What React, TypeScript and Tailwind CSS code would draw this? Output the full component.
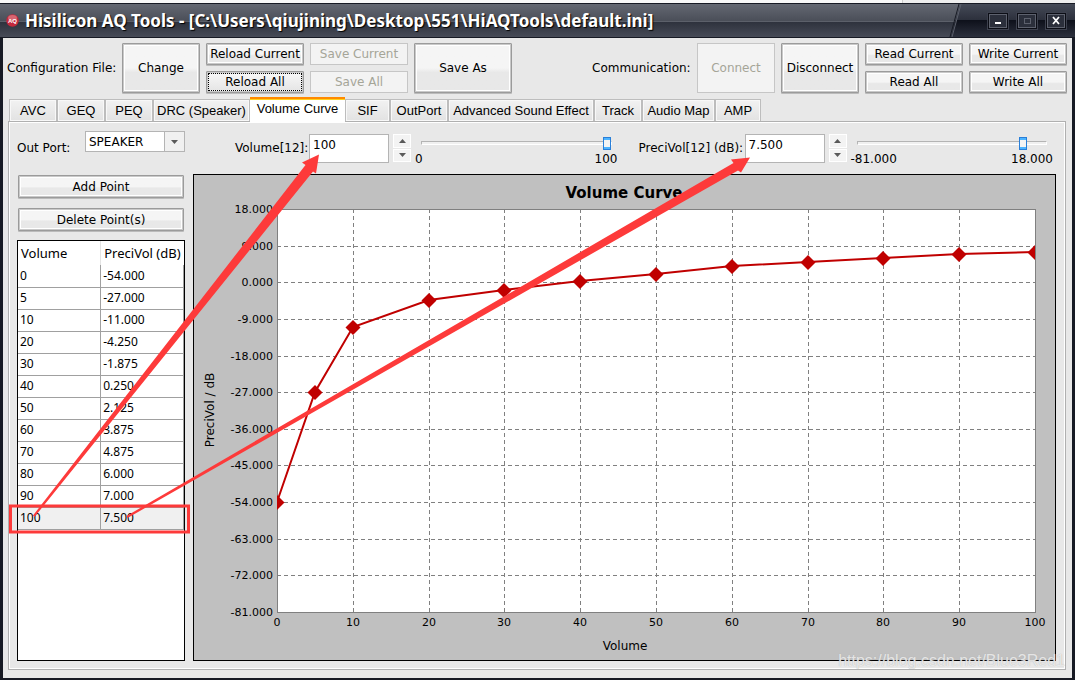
import { useState } from "react";

type Point = { volume: number; db: number };

const POINTS: Point[] = [
  { volume: 0, db: -54 },
  { volume: 5, db: -27 },
  { volume: 10, db: -11 },
  { volume: 20, db: -4.25 },
  { volume: 30, db: -1.875 },
  { volume: 40, db: 0.25 },
  { volume: 50, db: 2.125 },
  { volume: 60, db: 3.875 },
  { volume: 70, db: 4.875 },
  { volume: 80, db: 6 },
  { volume: 90, db: 7 },
  { volume: 100, db: 7.5 },
];

const TABS = [
  { name: "AVC", width: "w-12" },
  { name: "GEQ", width: "w-12" },
  { name: "PEQ", width: "w-12" },
  { name: "DRC (Speaker)", width: "w-[97px]" },
  { name: "Volume Curve", width: "w-[95px]" },
  { name: "SIF", width: "w-[45px]" },
  { name: "OutPort", width: "w-[58px]" },
  { name: "Advanced Sound Effect", width: "w-[146px]" },
  { name: "Track", width: "w-12" },
  { name: "Audio Map", width: "w-[73px]" },
  { name: "AMP", width: "w-[46px]" },
];

const DB_TICKS = [18, 9, 0, -9, -18, -27, -36, -45, -54, -63, -72, -81];
const VOLUME_TICKS = [0, 10, 20, 30, 40, 50, 60, 70, 80, 90, 100];

// plot area inside the chart's viewBox
const PLOT = { left: 83, top: 34, width: 758, height: 403 };
const toX = (volume: number) => Math.round(PLOT.left + (volume / 100) * PLOT.width);
const toY = (db: number) => Math.round(PLOT.top + ((18 - db) / 99) * PLOT.height);

const ToolButton = ({ children, className = "", disabled = false, focused = false }: any) => (
  <button
    disabled={disabled}
    className={`flex items-center justify-center whitespace-nowrap border p-px ${
      disabled
        ? "border-[#c6c6c6] bg-[#f3f3f3] text-[#a5a598]"
        : "rounded-[1px] border-[#9b9b9b] bg-[#c9c9c9] text-black shadow-[0_1px_0_#bbb]"
    } ${className}`}
  >
    <span
      className={`flex h-full w-full items-center justify-center ${
        disabled
          ? ""
          : focused
            ? "border border-dotted border-black bg-linear-to-b from-[#f6f6f6] to-[#e6e6e6]"
            : "border border-white bg-linear-to-b from-[#f5f5f5] from-50% to-[#e8e8e8] to-60%"
      }`}
    >
      {children}
    </span>
  </button>
);

const ButtonPair = ({ top, bottom, disabled, focusBottom }: any) => (
  <div className="flex w-[98px] flex-col gap-1.5">
    <ToolButton disabled={disabled} className="h-[22px]">
      {top}
    </ToolButton>
    <ToolButton disabled={disabled} focused={focusBottom} className="h-[22px]">
      {bottom}
    </ToolButton>
  </div>
);

const TitleBar = () => (
  <header className="relative flex h-[35px] items-center justify-between border-y border-[#171a24] bg-linear-to-b from-[#646872] via-[#4b4f59] via-50% to-[#434753]">
    <div className="absolute inset-x-0 bottom-0 h-4 border-t border-[#5c606a] bg-linear-to-b from-[#2e323d] to-[#474b57]" />
    <svg
      className="absolute top-0 right-0 h-[33px] w-[126px]"
      viewBox="0 0 126 33"
      preserveAspectRatio="none"
    >
      <defs>
        <linearGradient id="caption" x1="0" y1="0" x2="0" y2="1">
          <stop offset="0" stopColor="#454a57" />
          <stop offset="0.5" stopColor="#2b2f3b" />
          <stop offset="0.5" stopColor="#0e111b" />
          <stop offset="1" stopColor="#2c303d" />
        </linearGradient>
      </defs>
      <path d="M11 0H126V33H2Z" fill="url(#caption)" />
      <path d="M10 0L1 33" stroke="#171a24" />
      <path d="M12 0L3 33" stroke="#5c606c" />
    </svg>
    <div className="relative flex items-center gap-1.5 pl-1.5">
      <svg className="h-[13px] w-[13px]" viewBox="0 0 13 13">
        <circle cx="6.5" cy="6.5" r="6.2" fill="#c4283c" />
        <ellipse cx="6.5" cy="4" rx="4.5" ry="3" fill="#e08088" opacity="0.7" />
        <text
          x="6.5"
          y="9"
          textAnchor="middle"
          className="fill-white font-['Liberation_Sans'] text-[6px] font-bold"
        >
          AQ
        </text>
      </svg>
      <h1 className="font-['Noto_Sans','DejaVu_Sans',sans-serif] text-[17px] leading-6 font-bold whitespace-pre text-white [text-shadow:1px_1px_1px_#000]">
        {"Hisilicon AQ Tools - [C:\\Users\\qiujining\\Desktop\\551\\HiAQTools\\default.ini]"}
      </h1>
    </div>
    <div className="relative flex gap-[9px] pr-[9px]">
      {["Minimize", "Maximize", "Close"].map((name) => (
        <button
          key={name}
          aria-label={name}
          className="flex h-4 w-5 items-center justify-center border border-[#0b0d15] bg-[#2b2f3b] outline outline-[#3d414e] inset-ring inset-ring-[#5d616d]"
        >
          <svg className="h-3 w-3" viewBox="0 0 12 12" fill="none" shapeRendering="crispEdges">
            {name === "Minimize" && <path d="M3 7h6v2H3z" fill="#fff" />}
            {name === "Maximize" && <path d="M3.5 3.5h6v5h-6zM3 3h7" stroke="#5d616d" />}
            {name === "Close" && (
              <path d="M3 2l6 7M9 2l-6 7" stroke="#fff" strokeWidth="1.8" shapeRendering="auto" />
            )}
          </svg>
        </button>
      ))}
    </div>
  </header>
);

const Toolbar = () => (
  <div className="flex items-center gap-1.5 pt-[5px] pr-[5px] pl-1">
    <span className="w-[109px] whitespace-nowrap">Configuration File:</span>
    <ToolButton className="h-[50px] w-[78px]">Change</ToolButton>
    <ButtonPair top="Reload Current" bottom="Reload All" focusBottom />
    <ButtonPair top="Save Current" bottom="Save All" disabled />
    <ToolButton className="h-[50px] w-[98px]">Save As</ToolButton>
    <span className="ml-auto w-[99px] whitespace-nowrap">Communication:</span>
    <ToolButton disabled className="h-[50px] w-[78px]">
      Connect
    </ToolButton>
    <ToolButton className="h-[50px] w-[78px]">Disconnect</ToolButton>
    <ButtonPair top="Read Current" bottom="Read All" />
    <ButtonPair top="Write Current" bottom="Write All" />
  </div>
);

const TabBar = ({ active, setActive }: any) => (
  <nav className="flex h-6 items-end pl-px font-['Liberation_Sans',Arial,sans-serif] text-[13px]">
    {TABS.map((tab) => (
      <button
        key={tab.name}
        onClick={() => setActive(tab.name)}
        className={`whitespace-nowrap ${tab.width} ${
          active === tab.name
            ? "relative -mb-px h-[25px] border-t-2 border-[#ff8a00] bg-white pb-1 shadow-[inset_0_1px_0_#ffd21e]"
            : "h-[22px] border border-b-0 border-[#bdbdbd] bg-linear-to-b from-[#f2f2f2] to-[#e2e2e2] inset-ring inset-ring-[#f8f8f8]"
        }`}
      >
        {tab.name}
      </button>
    ))}
  </nav>
);

const Spinner = ({ label }: any) => (
  <div className="flex h-[28px] w-[18px] flex-col gap-px">
    <button
      aria-label={`Increase ${label}`}
      className="flex flex-1 items-center justify-center border border-white bg-[#f3f3f3]"
    >
      <svg className="h-1 w-[7px]" viewBox="0 0 7 4">
        <path d="M3.5 0L7 4H0Z" fill="#5a5a5a" />
      </svg>
    </button>
    <button
      aria-label={`Decrease ${label}`}
      className="flex flex-1 items-center justify-center border border-white bg-[#f3f3f3]"
    >
      <svg className="h-1 w-[7px]" viewBox="0 0 7 4">
        <path d="M3.5 4L7 0H0Z" fill="#5a5a5a" />
      </svg>
    </button>
  </div>
);

const ValueControl = ({ id, label, labelWidth, text, min, max, minText, maxText, value }: any) => {
  const [current, setCurrent] = useState(value);

  return (
    <div className="flex flex-auto items-start">
      <label htmlFor={id} className={`shrink-0 pt-1.5 whitespace-nowrap ${labelWidth}`}>
        {label}
      </label>
      <input
        id={id}
        defaultValue={text}
        className="h-[29px] w-20 shrink-0 border border-[#b4b4b4] bg-white px-[3px] pb-2"
      />
      <div className="pl-1">
        <Spinner label={label} />
      </div>
      <div className="w-32 grow pl-1">
        <input
          type="range"
          aria-label={`${label} slider`}
          min={min}
          max={max}
          step="any"
          value={current}
          onChange={(e) => setCurrent(Number(e.target.value))}
          className="mt-0.5 block h-[13px] w-full appearance-none bg-transparent px-1.5 [&::-webkit-slider-runnable-track]:h-1 [&::-webkit-slider-runnable-track]:border [&::-webkit-slider-runnable-track]:border-[#b4b4b4] [&::-webkit-slider-runnable-track]:border-r-white [&::-webkit-slider-runnable-track]:border-b-white [&::-webkit-slider-runnable-track]:bg-[#f0f0f0] [&::-webkit-slider-thumb]:-mt-[5px] [&::-webkit-slider-thumb]:h-[13px] [&::-webkit-slider-thumb]:w-2 [&::-webkit-slider-thumb]:appearance-none [&::-webkit-slider-thumb]:border [&::-webkit-slider-thumb]:border-[#2a7fd8] [&::-webkit-slider-thumb]:bg-[linear-gradient(#4db4ff_20%,#f4f4f4_20%,#f4f4f4_80%,#4db4ff_80%)]"
        />
        <div className="flex justify-between pt-0.5">
          <span>{minText}</span>
          <span>{maxText}</span>
        </div>
      </div>
    </div>
  );
};

const PointTable = () => (
  <div className="flex-1 border border-black bg-white">
    <table className="w-full table-fixed border-collapse text-left font-['Noto_Sans','Open_Sans',sans-serif] text-xs">
      <thead>
        <tr className="h-6 text-[13px] leading-4">
          <th className="border-r border-[#e4e4e4] pl-[3px] font-normal">Volume</th>
          <th className="pl-[3px] font-normal whitespace-nowrap">PreciVol (dB)</th>
        </tr>
      </thead>
      <tbody>
        {POINTS.map((p) => (
          <tr
            key={p.volume}
            className={`h-[22px] border-b border-[#a0a0a0] ${p.volume === 100 ? "bg-[#f0f0f0]" : ""}`}
          >
            <td className="border-r border-[#a0a0a0] pl-0.5">{p.volume}</td>
            <td className="border-r border-[#a0a0a0] pl-0.5">{p.db.toFixed(3)}</td>
          </tr>
        ))}
      </tbody>
    </table>
  </div>
);

const Chart = () => {
  const line = POINTS.map((p) => `${toX(p.volume)},${toY(p.db)}`).join(" ");
  const { left, top, width, height } = PLOT;

  return (
    <div className="min-w-0 flex-1 border border-black bg-[#c0c0c0]">
      <svg
        className="block w-full font-['DejaVu_Sans',Verdana,sans-serif] text-[11px]"
        viewBox="0 0 861 485"
      >
        <defs>
          <clipPath id="plot">
            <rect x={left} y={top} width={width} height={height} />
          </clipPath>
        </defs>
        <text x="430" y="23" textAnchor="middle" className="text-[15px] font-bold">
          Volume Curve
        </text>
        <g shapeRendering="crispEdges">
          <rect
            x={left + 0.5}
            y={top + 0.5}
            width={width}
            height={height}
            fill="#fff"
            stroke="#808080"
          />
          <g stroke="#808080" strokeDasharray="4 3">
            {DB_TICKS.slice(1, -1).map((db) => (
              <path key={db} d={`M${left} ${toY(db) + 0.5}H${left + width}`} />
            ))}
            {VOLUME_TICKS.slice(1, -1).map((v) => (
              <path key={v} d={`M${toX(v) + 0.5} ${top}V${top + height}`} />
            ))}
          </g>
        </g>
        <g clipPath="url(#plot)">
          <polyline points={line} fill="none" stroke="#c00000" strokeWidth="2" />
          {POINTS.map((p) => (
            <path
              key={p.volume}
              d={`M${toX(p.volume)} ${toY(p.db) - 7}l7.5 7.5l-7.5 7.5l-7.5 -7.5Z`}
              fill="#c00000"
            />
          ))}
        </g>
        {DB_TICKS.map((db) => (
          <text key={db} x={left - 4} y={toY(db) + 4} textAnchor="end">
            {db.toFixed(3)}
          </text>
        ))}
        {VOLUME_TICKS.map((v) => (
          <text key={v} x={toX(v)} y="451" textAnchor="middle">
            {v}
          </text>
        ))}
        <text x="431" y="475" textAnchor="middle" className="text-xs">
          Volume
        </text>
        <text transform="translate(20 235) rotate(-90)" textAnchor="middle" className="text-xs">
          PreciVol / dB
        </text>
      </svg>
    </div>
  );
};

// red marks that tie the selected row to the two edit boxes
const Callouts = () => (
  <svg
    className="pointer-events-none absolute inset-0 h-full w-full"
    viewBox="0 0 1075 680"
    fill="#fd3a3a"
  >
    <rect x="10.5" y="505.5" width="178" height="26" fill="none" stroke="#fd3a3a" strokeWidth="3" />
    <path d="M33 515L305.5 164.5L302 162L319 154L316 173L313 171L34.5 516.5Z" />
    <path d="M126.5 515.5L733.5 162.5L731 159L750 157L741 172L738 170L127.5 517.5Z" />
  </svg>
);

const App = () => {
  const [active, setActive] = useState("Volume Curve");

  return (
    <div className="relative flex min-h-screen flex-col overflow-hidden bg-white font-['DejaVu_Sans',Verdana,sans-serif] text-xs text-black">
      <div className="flex h-[3px] justify-end bg-[#f8f8f8]">
        <div className="w-[173px] border-l border-[#ccc] bg-[#eee]" />
      </div>
      <div className="flex flex-1 flex-col bg-[#171a24]">
        <TitleBar />
        <main className="mx-[3px] mb-[3px] flex flex-1 flex-col bg-[#e8e8e8]">
          <Toolbar />
          <div className="flex flex-1 flex-col pt-[4px] pr-1.5 pb-2 pl-[5px]">
            <TabBar active={active} setActive={setActive} />
            <section className="flex flex-1 flex-col border border-[#b0b0b0] pr-[9px] pb-2 pl-2 inset-ring inset-ring-white">
              <div className="flex h-[52px] items-start pt-3 pr-[3px]">
                <label htmlFor="port" className="w-[68px] shrink-0 pt-1.5">
                  Out Port:
                </label>
                <div className="relative -mt-[3px] mr-[50px]">
                  <select
                    id="port"
                    className="h-[21px] w-[100px] appearance-none border border-[#b4b4b4] bg-white pl-[3px]"
                  >
                    <option>SPEAKER</option>
                  </select>
                  <span className="pointer-events-none absolute inset-y-px right-px flex w-5 items-center justify-center border-l border-[#b4b4b4] bg-[#f0f0f0]">
                    <svg className="h-1 w-[7px]" viewBox="0 0 7 4">
                      <path d="M3.5 4L7 0H0Z" fill="#5a5a5a" />
                    </svg>
                  </span>
                </div>
                <div className="flex min-w-0 flex-1 gap-[21px]">
                  <ValueControl
                    id="volume"
                    label="Volume[12]:"
                    labelWidth="w-[74px]"
                    text="100"
                    min={0}
                    max={100}
                    minText="0"
                    maxText="100"
                    value={100}
                  />
                  <ValueControl
                    id="precivol"
                    label="PreciVol[12] (dB):"
                    labelWidth="w-[106px]"
                    text="7.500"
                    min={-81}
                    max={18}
                    minText="-81.000"
                    maxText="18.000"
                    value={7.5}
                  />
                </div>
              </div>
              <div className="flex flex-1 gap-2">
                <div className="flex w-[168px] flex-col">
                  <div className="flex flex-col gap-2.5 px-px pt-px pb-[9px]">
                    <ToolButton className="h-[23px]">Add Point</ToolButton>
                    <ToolButton className="h-[23px]">Delete Point(s)</ToolButton>
                  </div>
                  <PointTable />
                </div>
                <Chart />
              </div>
            </section>
          </div>
        </main>
      </div>
      <Callouts />
      <span className="absolute right-2.5 bottom-2 font-['Liberation_Sans',Arial,sans-serif] text-base text-white/70 [text-shadow:0_0_1px_#aaa]">
        https://blog.csdn.net/Blue3Red1
      </span>
    </div>
  );
};

export default App;
